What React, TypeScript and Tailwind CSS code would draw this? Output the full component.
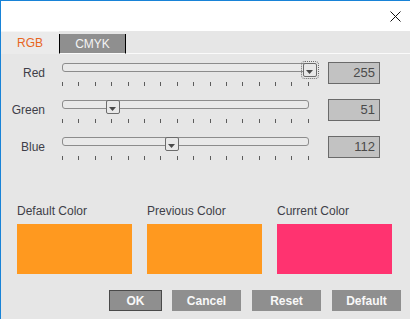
import React from 'react';

const channels = [
    { label: 'Red', value: 255, focused: true },
    { label: 'Green', value: 51, focused: false },
    { label: 'Blue', value: 112, focused: false },
];

const swatches = [
    { label: 'Default Color', color: 'bg-[#ff991f]' },
    { label: 'Previous Color', color: 'bg-[#ff991f]' },
    { label: 'Current Color', color: 'bg-[#ff3370]' },
];

const ticks = Array.from({ length: 16 }, (_, i) => i);

const SliderRow: React.FC<{ label: string; value: number; focused: boolean }> = ({ label, value, focused }) => {
    const left = 1.5 + (value / 255) * 246 - 7;
    return (
        <div className="flex items-start h-[37px]">
            <div className="w-[44px] h-[22px] flex items-center justify-end text-[12px] text-[#3e3e48]">{label}</div>
            <div className="relative ml-[17px] w-[247px]">
                <div className="mt-[1px] h-[9px] rounded-[3px] border border-[#8c8c8c] bg-[#e9e9e9]"></div>
                <div className="mt-[10px] flex justify-between">
                    {ticks.map((t) => (
                        <span key={t} className="w-px h-[4px] bg-[#5c5c5c]"></span>
                    ))}
                </div>
                {/* Thumb */}
                <div
                    className={
                        focused
                            ? 'absolute top-[1px] w-[14px] h-[14px] rounded-[2px] border border-[#6c6c6c] bg-[#e8e8e8] flex items-end justify-center pb-[2px] outline outline-1 outline-dotted outline-[#6a6a6a] outline-offset-[1px]'
                            : 'absolute top-[1px] w-[14px] h-[14px] rounded-[2px] border border-[#6c6c6c] bg-[#e8e8e8] flex items-end justify-center pb-[2px]'
                    }
                    style={{ left: `${left}px` }}
                >
                    <svg width="7" height="4" viewBox="0 0 7 4">
                        <path d="M0 0 H7 L3.5 4 Z" fill="#4a4a4a" />
                    </svg>
                </div>
            </div>
            <div className="ml-[19px] w-[52px] h-[22px] border border-[#6a6a6a] bg-[#c2c2c2] flex items-center justify-end pr-[4px] text-[13px] text-[#4a4a4a]">
                {value}
            </div>
        </div>
    );
};

const App: React.FC = () => {
    return (
        <div className="w-[410px] h-[319px] bg-[#e6e6e6] border-t border-l border-[#1883d7] flex flex-col font-['Liberation_Sans',Arial,sans-serif] overflow-hidden">
            {/* Title bar */}
            <div className="h-[30px] bg-white flex items-center justify-end pr-[9px]">
                <svg width="11" height="11" viewBox="0 0 11 11">
                    <path d="M0.5 0.5 L10.5 10.5 M10.5 0.5 L0.5 10.5" stroke="#111" strokeWidth="1" />
                </svg>
            </div>

            {/* Tabs */}
            <div className="h-[23px] flex items-end">
                <div className="w-[58px] h-full bg-[#ebebeb] border-t border-[#f6f6f6] flex items-center justify-center text-[12px] text-[#e8661e]">
                    RGB
                </div>
                <div className="w-[67px] h-[20px] bg-[#8f8f8f] border-x border-black border-b border-b-[#fafafa] flex items-center justify-center text-[12px] text-[#f4f4f4]">
                    CMYK
                </div>
                <div className="flex-1 h-full border-b border-[#fafafa]"></div>
            </div>

            {/* Sliders */}
            <div className="mt-[8px] flex flex-col">
                {channels.map((c) => (
                    <SliderRow key={c.label} label={c.label} value={c.value} focused={c.focused} />
                ))}
            </div>

            {/* Swatches */}
            <div className="mt-[30px] pl-[16px] flex gap-[15px]">
                {swatches.map((s) => (
                    <div key={s.label} className="flex flex-col">
                        <div className="h-[16px] leading-[16px] text-[12px] text-[#3e3e48]">{s.label}</div>
                        <div className={`mt-[5px] w-[115px] h-[50px] ${s.color}`}></div>
                    </div>
                ))}
            </div>

            {/* Buttons */}
            <div className="mt-[16px] flex justify-end pr-[9px] text-[12px] font-bold text-[#f8f8f8]">
                <button className="w-[53px] h-[21px] bg-[#8f8f8f] border border-[#4a4a4a] flex items-center justify-center">OK</button>
                <button className="ml-[10px] w-[69px] h-[21px] bg-[#8f8f8f] flex items-center justify-center">Cancel</button>
                <button className="ml-[11px] w-[69px] h-[21px] bg-[#8f8f8f] flex items-center justify-center">Reset</button>
                <button className="ml-[11px] w-[69px] h-[21px] bg-[#8f8f8f] flex items-center justify-center">Default</button>
            </div>
        </div>
    );
};

export default App;
